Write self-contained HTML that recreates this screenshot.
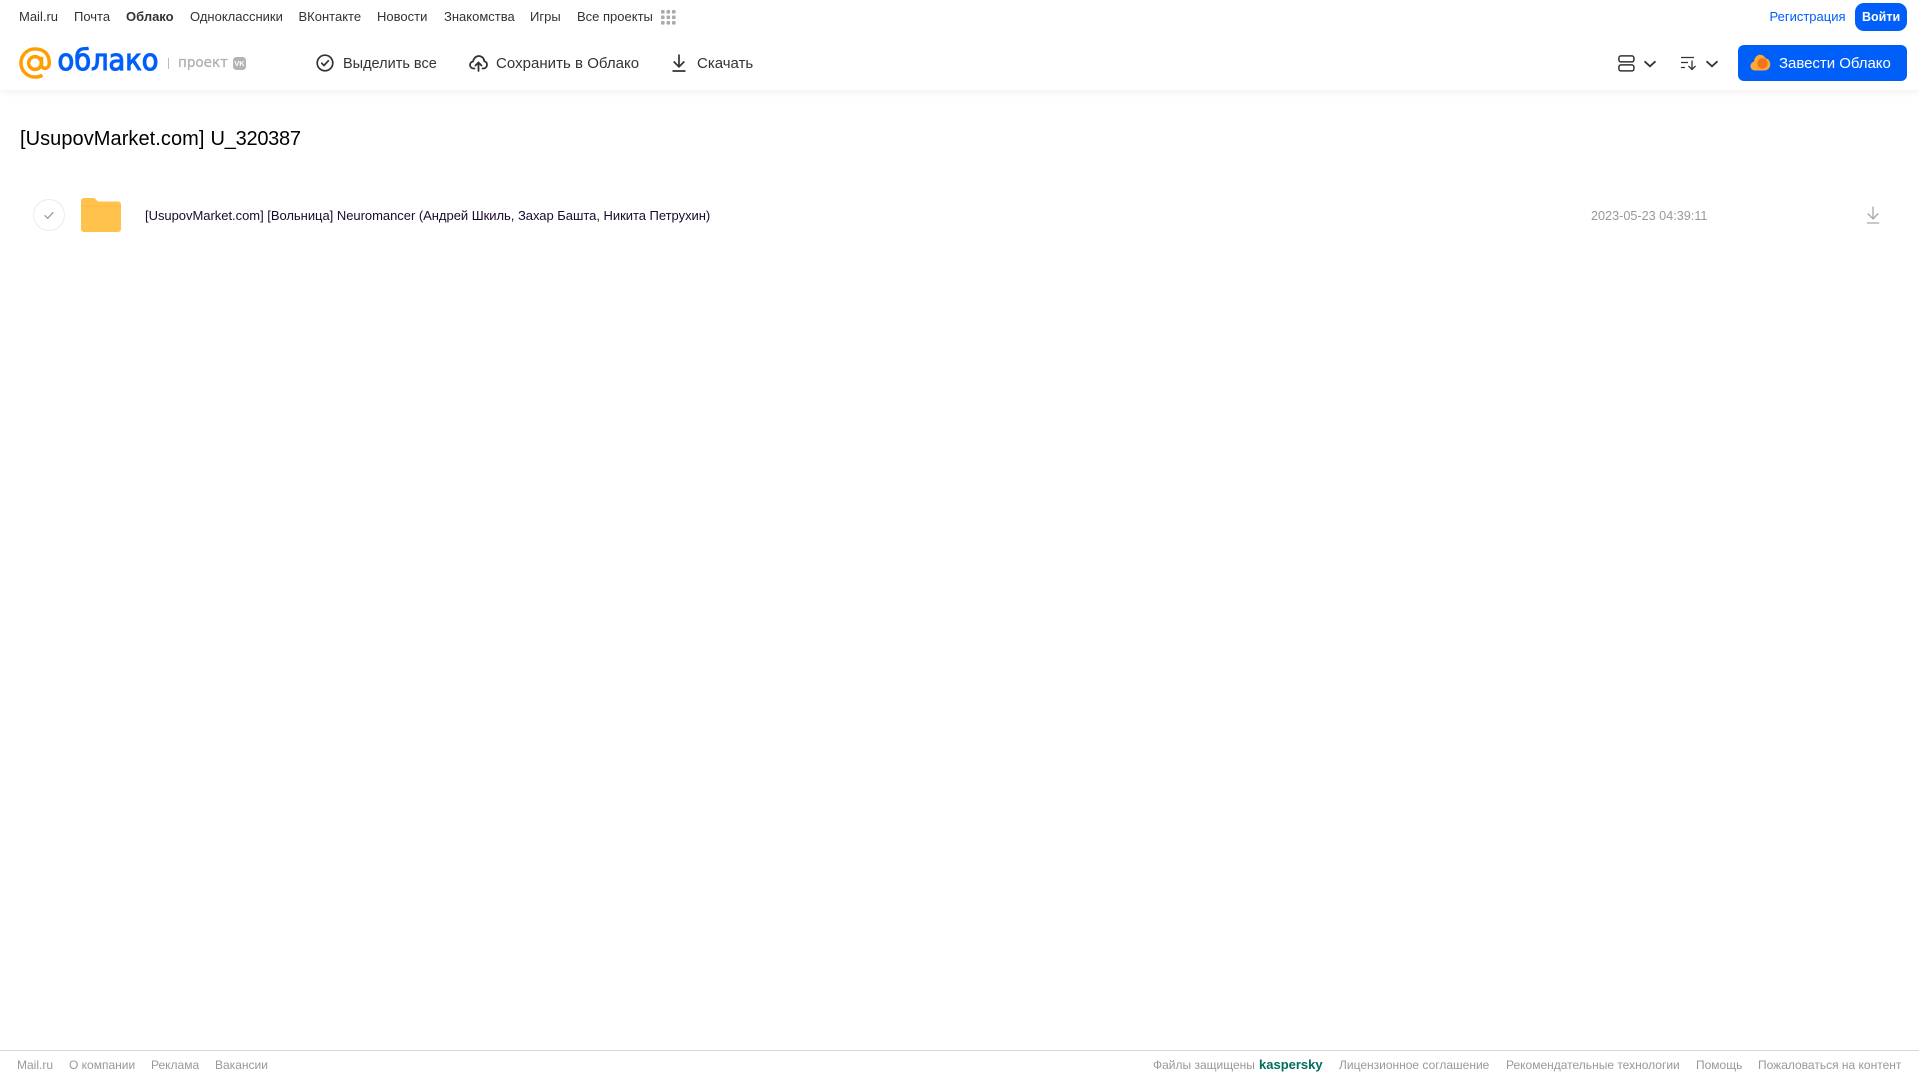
<!DOCTYPE html>
<html lang="ru"><head><meta charset="utf-8"><title>Облако</title>
<style>
html,body{margin:0;padding:0;background:#fff}
body{position:relative;width:1919px;height:1079px;overflow:hidden;font-family:"Liberation Sans",Arial,sans-serif}
.t{position:absolute;white-space:nowrap;line-height:16px}
.n{top:9px;font-size:13px;color:#333}
.a{top:54px;font-size:15px;line-height:18px;color:#333}
.f{top:1057px;font-size:12px;color:#999}
svg{position:absolute;overflow:visible}
</style></head><body>
<div style="position:absolute;left:0;top:0;width:1919px;height:90px;background:#fff;box-shadow:0 2px 8px rgba(0,0,0,.06)"></div>

<span class="t n" style="left:19px">Mail.ru</span>
<span class="t n" style="left:74px">Почта</span>
<span class="t n" style="left:126px;font-weight:bold">Облако</span>
<span class="t n" style="left:190px">Одноклассники</span>
<span class="t n" style="left:298.500px">ВКонтакте</span>
<span class="t n" style="left:377px">Новости</span>
<span class="t n" style="left:444px">Знакомства</span>
<span class="t n" style="left:530px">Игры</span>
<span class="t n" style="left:577px">Все проекты</span>
<svg style="left:661px;top:10px" width="15" height="15" fill="#aaa"><rect x="0" y="0" width="3.6" height="3.6" rx="1"/><rect x="5.5" y="0" width="3.6" height="3.6" rx="1"/><rect x="11" y="0" width="3.6" height="3.6" rx="1"/><rect x="0" y="5.5" width="3.6" height="3.6" rx="1"/><rect x="5.5" y="5.5" width="3.6" height="3.6" rx="1"/><rect x="11" y="5.5" width="3.6" height="3.6" rx="1"/><rect x="0" y="11" width="3.6" height="3.6" rx="1"/><rect x="5.5" y="11" width="3.6" height="3.6" rx="1"/><rect x="11" y="11" width="3.6" height="3.6" rx="1"/></svg>

<span class="t n" style="left:1769.500px;color:#005ff9">Регистрация</span>
<div style="position:absolute;left:1855px;top:3px;width:52px;height:28px;border-radius:9px;background:#005ff9"></div>
<span class="t n" style="left:1862px;color:#fff;font-weight:bold;font-size:12.500px">Войти</span>

<!-- logo -->
<svg style="left:19px;top:47px" width="33" height="32" viewBox="0 0 34 33" fill="none" stroke="#ff9e00" stroke-width="3.600"><circle cx="16.5" cy="16.5" r="6.6"/><path d="M23.2 10v8.5c0 5 7.8 5 8-1.500C31.600 7 25 2 16.500 2 8.500 2 2 8.500 2 16.500S8.500 31 16.500 31c3 0 5.500-.7 7.500-2"/></svg>
<svg style="left:56px;top:44px" width="106" height="36"><text x="1.500" y="26" textLength="101" lengthAdjust="spacingAndGlyphs" font-family="DejaVu Sans" font-size="29" stroke="#005ff9" stroke-width="1.100" fill="#005ff9">облако</text></svg>
<div style="position:absolute;left:168px;top:58px;width:1px;height:11px;background:#bbb"></div>
<svg style="left:177px;top:52px" width="54" height="22"><text x="1" y="15" textLength="50" lengthAdjust="spacingAndGlyphs" font-family="DejaVu Sans" font-size="14.500" stroke="#b0b0b0" stroke-width=".3" fill="#b0b0b0">проект</text></svg>
<div style="position:absolute;left:233px;top:57px;width:13px;height:13px;border-radius:3.500px;background:#b3b3b3;color:#fff;font-size:7.500px;font-weight:bold;line-height:13px;text-align:center">VK</div>

<!-- actions -->
<svg style="left:316px;top:54px" width="18" height="18" viewBox="0 0 18 18" fill="none" stroke="#333" stroke-width="1.700"><circle cx="9" cy="9" r="7.800"/><path d="M5.700 9.200l2.300 2.300 4.300-4.700" stroke-linecap="round" stroke-linejoin="round"/></svg>
<span class="t a" style="left:343px;top:55px;font-size:14.500px">Выделить все</span>
<svg style="left:469px;top:54px" width="19" height="18" viewBox="0 0 19 18" fill="none" stroke="#333" stroke-width="1.800" stroke-linecap="round" stroke-linejoin="round"><path d="M5.500 14.500H4.700C2.600 14.500 1 13 1 11c0-1.800 1.300-3.200 3-3.500C4.600 4.300 7 2 9.800 2c3 0 5.200 2.300 5.500 5.300 1.600.4 2.700 1.800 2.700 3.500 0 2-1.500 3.700-3.600 3.700H13.500"/><path d="M9.500 17V9M6.500 11.500l3-3 3 3"/></svg>
<span class="t a" style="left:496px;top:55px;letter-spacing:.03px">Сохранить в Облако</span>
<svg style="left:672px;top:54px" width="14" height="18" viewBox="0 0 14 18" fill="none" stroke="#333" stroke-width="1.700"><path d="M7 0.500V12.500M1.700 7.500L7 12.800 12.300 7.500M.5 17H13.500"/></svg>
<span class="t a" style="left:697px;top:55px">Скачать</span>

<svg style="left:1618px;top:55px" width="17" height="17" viewBox="0 0 17 17" fill="none" stroke="#333" stroke-width="1.500"><rect x=".9" y=".9" width="15" height="6" rx="2"/><rect x=".9" y="9.900" width="15" height="6" rx="2"/></svg>
<svg style="left:1644px;top:60px" width="13" height="8" fill="none" stroke="#333" stroke-width="1.800"><path d="M.5 1.300l5.500 5 5.500-5"/></svg>
<svg style="left:1681px;top:56px" width="16" height="15" fill="none" stroke="#333" stroke-width="1.300"><path d="M0 1.500H13M0 6.500H7M0 11.500H4M11 4.500V13.500M7.500 10l3.500 3.500 3.500-3.500"/></svg>
<svg style="left:1706px;top:60px" width="13" height="8" fill="none" stroke="#333" stroke-width="1.800"><path d="M.5 1.300l5.500 5 5.500-5"/></svg>
<div style="position:absolute;left:1738px;top:45px;width:169px;height:36px;border-radius:6px;background:#005ff9"></div>
<svg style="left:1750px;top:54px" width="21" height="17" viewBox="0 0 21 17"><path d="M5 16.500C2.200 16.500.500 14.500.500 12c0-2.300 1.500-4 3.500-4.400C4.500 3.500 7 .8 10 .8c2.500 0 4.400 1.400 5.300 3.400 2.800.3 5 2.800 5 6 0 3.500-2.600 6.300-6 6.300z" fill="#ffa930"/><circle cx="12.500" cy="9.500" r="5.200" fill="#f2711c"/></svg>
<span class="t a" style="left:1779px;top:55px;color:#fff;letter-spacing:-.03px">Завести Облако</span>

<!-- title -->
<span class="t" style="left:20px;top:126.500px;font-size:20px;line-height:24px;color:#000;letter-spacing:.06px">[UsupovMarket.com]</span>
<span class="t" style="left:210.500px;top:126.500px;font-size:20px;line-height:24px;color:#000;letter-spacing:-.25px">U_320387</span>

<!-- row -->
<svg style="left:33px;top:199px" width="32" height="32" fill="none"><circle cx="16" cy="16" r="15.500" stroke="#ececec"/><path d="M11.700 16.300l3 3 5.500-6" stroke="#999" stroke-width="1.300"/></svg>
<svg style="left:81px;top:198px" width="40" height="34" viewBox="0 0 40 34"><path d="M0 3C0 1.300 1.300 0 3 0h9c1.500 0 2.500.7 3.500 2s1.700 1.500 3 1.500H37c1.700 0 3 1.300 3 3V31c0 1.700-1.300 3-3 3H3c-1.700 0-3-1.300-3-3z" fill="#ffc34d"/><path d="M0 8h40" stroke="#ffb52e" stroke-width=".8"/></svg>
<span class="t" style="left:145px;top:208px;font-size:13px;letter-spacing:-.03px;color:#1a0a2e">[UsupovMarket.com] [Вольница] Neuromancer (Андрей Шкиль, Захар Башта, Никита Петрухин)</span>
<span class="t" style="left:1591px;top:208px;font-size:12.650px;color:#999">2023-05-23 04:39:11</span>
<svg style="left:1866px;top:206px" width="14" height="18" viewBox="0 0 14 18" fill="none" stroke="#a6a6a6" stroke-width="1.300"><path d="M7 0.500V12.500M1.700 7.500L7 12.800 12.300 7.500M.8 17H13.200"/></svg>

<!-- footer -->
<div style="position:absolute;left:0;top:1050px;width:1919px;height:1px;background:#d9d9d9"></div>
<span class="t f" style="left:17px">Mail.ru</span>
<span class="t f" style="left:69px">О компании</span>
<span class="t f" style="left:151px">Реклама</span>
<span class="t f" style="left:215px">Вакансии</span>
<span class="t f" style="left:1153px">Файлы защищены</span>
<span class="t f" style="left:1259px;color:#006d5c;font-weight:bold;font-size:13px">kaspersky</span>
<span class="t f" style="left:1339px">Лицензионное соглашение</span>
<span class="t f" style="left:1506px">Рекомендательные технологии</span>
<span class="t f" style="left:1696px">Помощь</span>
<span class="t f" style="left:1758px">Пожаловаться на контент</span>
</body></html>
